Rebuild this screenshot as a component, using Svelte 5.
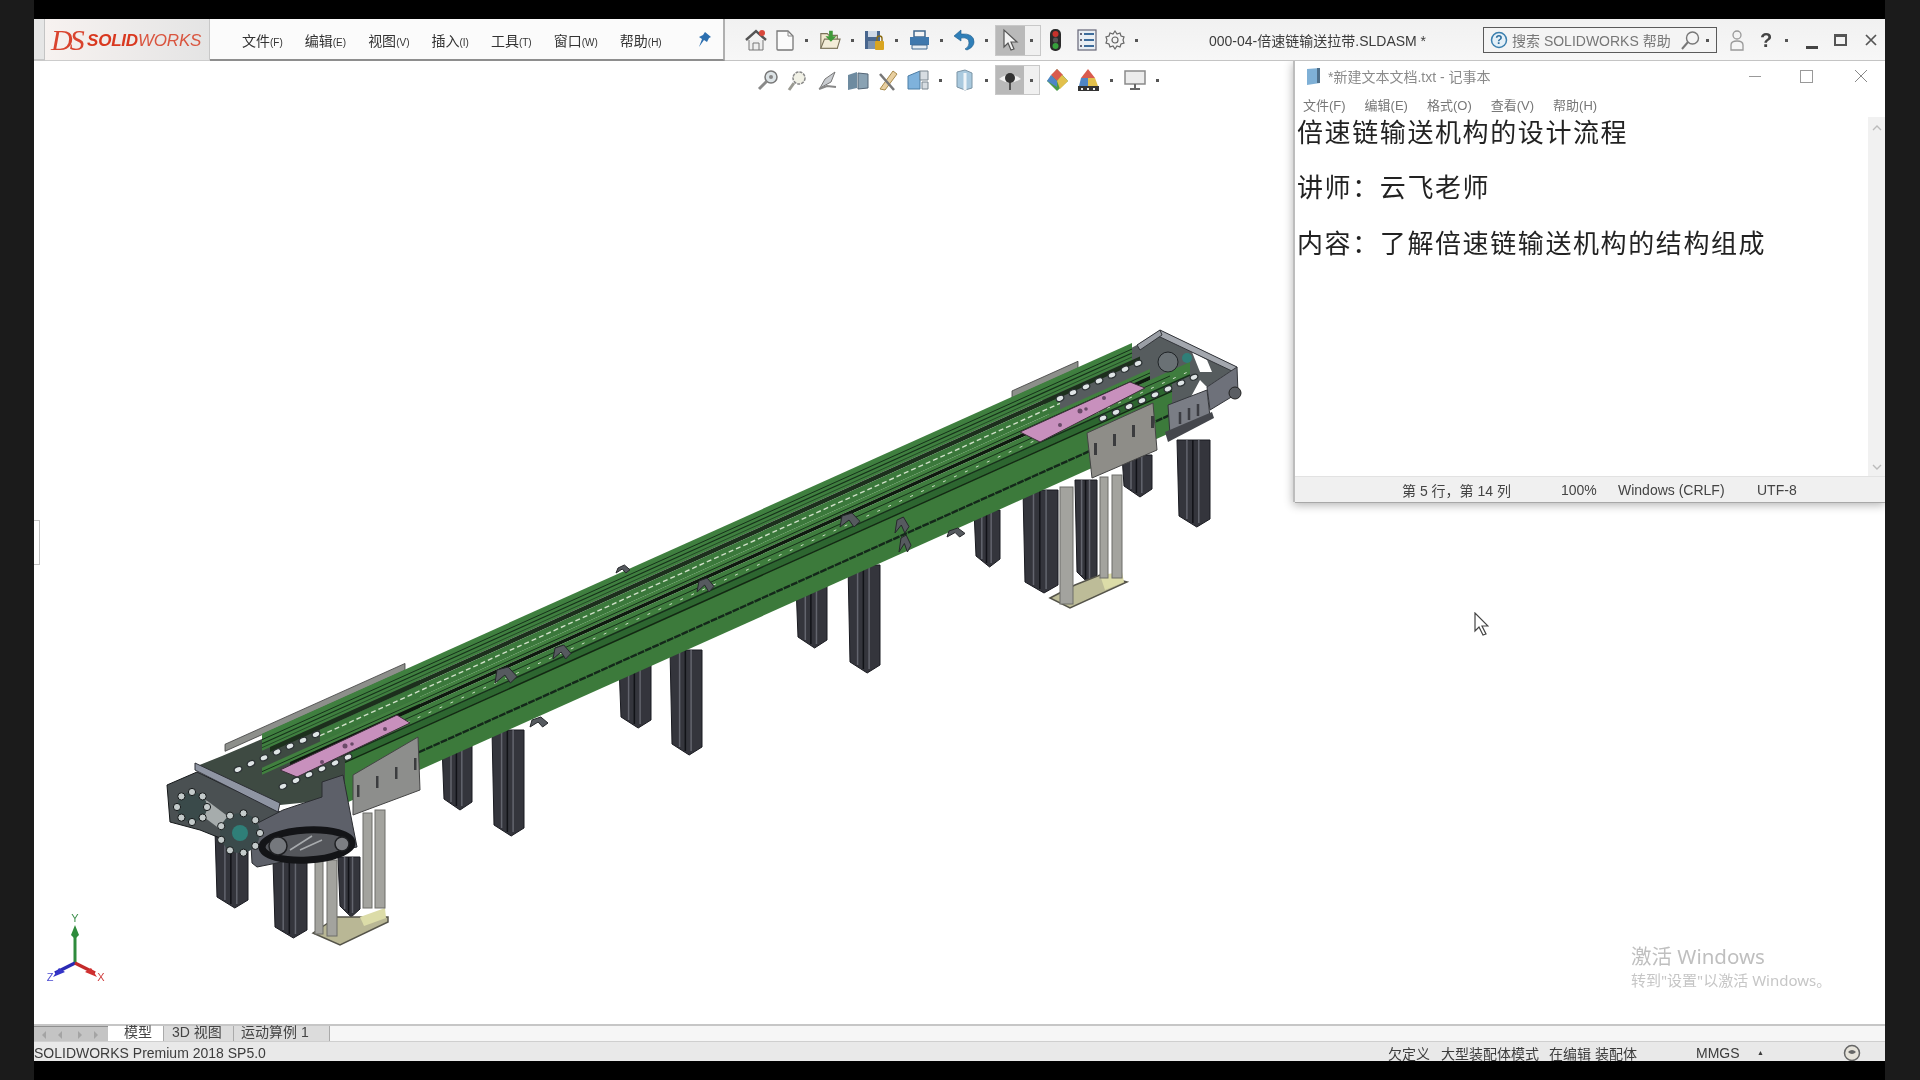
<script>
  // the conveyor is drawn along one slope, d = vertical offset from the back edge
  const slope = 0.449;
  const ry = (x, d) => 700 + d - slope * (x - 337);
  const band = (d0, d1, x0, x1) =>
    `${x0},${ry(x0, d0)} ${x1},${ry(x1, d0)} ${x1},${ry(x1, d1)} ${x0},${ry(x0, d1)}`;

  const menu = [
    ['文件', '(F)'], ['编辑', '(E)'], ['视图', '(V)'], ['插入', '(I)'],
    ['工具', '(T)'], ['窗口', '(W)'], ['帮助', '(H)']
  ];
  const noteMenu = ['文件(F)', '编辑(E)', '格式(O)', '查看(V)', '帮助(H)'];

  const legs = [
    [442, 30, 745, 810], [492, 32, 730, 836], [619, 32, 665, 728], [670, 32, 650, 755],
    [796, 31, 585, 648], [848, 32, 565, 673], [974, 26, 510, 567], [1122, 30, 455, 497],
    [1177, 33, 440, 527], [1023, 35, 490, 593], [1075, 22, 480, 583],
    [215, 33, 830, 908], [273, 34, 860, 938], [338, 22, 857, 917]
  ];
  const posts = [
    [315, 8, 860, 934], [327, 10, 860, 936], [363, 9, 813, 908], [375, 10, 810, 908],
    [1060, 13, 487, 604], [1100, 8, 477, 578], [1112, 10, 475, 578]
  ];
  const legPoints = ([x, w, top, bot]) =>
    `${x},${top} ${x + w},${top} ${x + w},${bot - 8} ${x + w * 0.6},${bot} ${x + 2},${bot - 11}`;

  // green rails, thin grooves and dashes
  const bands = [
    [0, 17, 262, 1132, '#3f7f3f'], [17, 22, 270, 1140, '#1c2f1c'], [22, 34, 320, 1060, '#3b783b'],
    [34, 41, 262, 1150, '#41803f'], [41, 45, 290, 1150, '#0e1a0e'], [45, 58, 300, 1190, '#3f7d3e'],
    [58, 66, 345, 1172, '#2d6630'], [66, 107, 345, 1172, '#3c7a3b']
  ];
  const lines = [
    [6, 1, 262, 1132, '#16311a', ''], [10, 1.2, 262, 1132, '#16311a', ''], [14, 0.8, 262, 1132, '#1c3c20', ''],
    [28, 1.4, 320, 1060, '#cfe0c8', '5 3'], [38, 1, 262, 1150, '#16311a', ''], [50, 1, 320, 1170, '#17321a', ''],
    [54, 1, 330, 1190, '#cfe0c8', '3 9'], [58, 1.4, 340, 1190, '#16301a', ''],
    [66, 1.4, 345, 1172, '#122812', ''], [89, 2.4, 375, 1172, '#14281a', '7 1']
  ];

  const rollers = (x0, x1, d, step) => {
    const out = [];
    for (let x = x0; x <= x1; x += step) out.push([x, ry(x, d)]);
    return out;
  };
  const beads = [
    ...rollers(238, 320, 25, 13), ...rollers(283, 352, 62, 13),
    ...rollers(1060, 1150, 23, 13), ...rollers(1103, 1200, 62, 13)
  ];
  const ring = (cx, cy, r, n) =>
    Array.from({ length: n }, (_, i) => [
      cx + r * Math.cos((i * 2 * Math.PI) / n),
      cy + r * Math.sin((i * 2 * Math.PI) / n)
    ]);
  const sprocket = [...ring(192, 807, 15, 8), ...ring(240, 833, 20, 9)];
  const brackets = [
    [495, 667, 22, 16], [553, 645, 18, 14], [697, 578, 17, 14], [840, 513, 20, 14],
    [895, 517, 14, 16], [899, 535, 12, 17], [616, 565, 14, 8], [530, 717, 18, 10], [947, 528, 18, 9]
  ];
  const slots = [[0, 0], [19, -9], [38, -18], [57, -27]];
</script>

<div class="screen">
  <div class="topgap"></div>

  <header class="toolbar">
    <div class="strip"></div>
    <div class="logo">
      <span class="ds">DS</span>
      <span class="brand"><b>SOLID</b>WORKS</span>
    </div>
    <nav class="menu">
      {#each menu as [name, key]}
        <span class="menuitem">{name}<small>{key}</small></span>
      {/each}
      <svg class="pin" width="16" height="18" viewBox="0 0 16 18">
        <path d="M9 1l6 5-2 1-2 4-3-2-5 7 3-8-3-2 4-2z" fill="#2c6fb0" />
      </svg>
    </nav>
    <div class="tools">
      <svg width="22" height="22" viewBox="0 0 22 22">
        <path d="M1 11L11 2l10 9" fill="none" stroke="#555" stroke-width="2.4" />
        <path d="M4 11v10h14V11" fill="#eee" stroke="#777" />
        <path d="M8 21v-7h6v7" fill="none" stroke="#777" />
        <circle cx="17" cy="4" r="3" fill="#d8483c" />
      </svg>
      <svg width="20" height="22" viewBox="0 0 20 22">
        <path d="M2 2h11l5 5v13q0 1-1 1H3q-1 0-1-1z" fill="#fbfbfb" stroke="#777" stroke-width="1.3" />
        <path d="M13 2v5h5" fill="none" stroke="#888" />
      </svg>
      <i class="dd"></i>
      <svg width="22" height="22" viewBox="0 0 24 22">
        <path d="M2 4h7l2 2h9v14H2z" fill="#f1e9cf" stroke="#7a7258" stroke-width="1.2" />
        <path d="M2 20l4-10h17l-3 10z" fill="#f3edd8" stroke="#7a7258" stroke-width="1.2" />
        <path d="M11 1h4v6h4l-6 6-6-6h4z" fill="#3f9a3a" />
      </svg>
      <i class="dd"></i>
      <svg width="21" height="22" viewBox="0 0 21 22">
        <path d="M1 2h15v18H1z" fill="#48668e" />
        <path d="M4 2h9v6H4z" fill="#cfd9e6" />
        <path d="M4 12h9v8H4z" fill="#7d93ae" />
        <rect x="11" y="12" width="9" height="9" rx="1" fill="#d9a520" />
        <path d="M13 12V9.500a2.500 2.500 0 0 1 5 0V12" fill="none" stroke="#8a6a10" stroke-width="1.400" />
      </svg>
      <i class="dd"></i>
      <svg width="21" height="22" viewBox="0 0 21 22">
        <path d="M5 2h11v6H5z" fill="#f4f4f4" stroke="#40688f" stroke-width="1.500" />
        <path d="M1 8h19v8H1z" fill="#3f78ad" />
        <path d="M3 16h15v4H3z" fill="#e6edf3" stroke="#40688f" />
      </svg>
      <i class="dd"></i>
      <svg width="22" height="22" viewBox="0 0 22 22">
        <path d="M8 1L1 7l7 5V9q8-1 8 5 0 4-4 6l2 1q7-3 7-8 0-9-13-8z" fill="#2f7fb8" stroke="#1d5b8a" stroke-width=".6" />
      </svg>
      <i class="dd"></i>
      <div class="pressed">
        <span class="pressed-main">
          <svg width="18" height="24" viewBox="0 0 18 24">
            <path d="M3 2v17l4-4 3 7 3-1-3-7h6z" fill="#f3f3f3" stroke="#555" stroke-width="1.200" />
          </svg>
        </span>
        <span class="pressed-side"><i class="dd"></i></span>
      </div>
      <svg class="light" width="11" height="22" viewBox="0 0 11 22">
        <rect width="11" height="22" rx="5" fill="#2b2b2b" />
        <circle cx="5.500" cy="5" r="3" fill="#c8322c" />
        <circle cx="5.500" cy="11" r="2.600" fill="#555" />
        <circle cx="5.500" cy="17" r="3" fill="#37a03c" />
      </svg>
      <svg class="list" width="20" height="22" viewBox="0 0 20 22">
        <rect x="1" y="1" width="18" height="20" fill="#e9eef3" stroke="#667" stroke-width="1.200" />
        <path d="M7 5h10M7 11h10M7 17h10" stroke="#3d6c9b" stroke-width="2" />
        <path d="M3 5h2M3 11h2M3 17h2" stroke="#667" stroke-width="2" />
      </svg>
      <svg width="20" height="22" viewBox="0 0 20 22">
        <path d="M10 2l2 3 3-1 1 3 3 1-1 3 1 3-3 1-1 3-3-1-2 3-2-3-3 1-1-3-3-1 1-3-1-3 3-1 1-3 3 1z" fill="none" stroke="#666" stroke-width="1.200" />
        <circle cx="10" cy="11" r="3" fill="none" stroke="#666" stroke-width="1.200" />
      </svg>
      <i class="dd"></i>
      <span class="doc">000-04-倍速链输送拉带.SLDASM *</span>
      <div class="search">
        <svg width="18" height="18" viewBox="0 0 18 18">
          <circle cx="9" cy="9" r="7.500" fill="#e4f0f8" stroke="#3b7fae" stroke-width="1.500" />
          <text x="9" y="13" text-anchor="middle" class="help">?</text>
        </svg>
        <span class="search-text">搜索 SOLIDWORKS 帮助</span>
        <svg class="lens" width="19" height="19" viewBox="0 0 19 19">
          <circle cx="11.500" cy="7" r="6" fill="none" stroke="#777" stroke-width="1.400" />
          <path d="M7 11l-6 7" stroke="#777" stroke-width="2" />
        </svg>
        <i class="dd"></i>
      </div>
      <svg class="user" width="16" height="22" viewBox="0 0 16 22">
        <circle cx="8" cy="6" r="4" fill="none" stroke="#999" stroke-width="1.300" />
        <path d="M2 21v-5q0-4 6-4t6 4v5z" fill="none" stroke="#999" stroke-width="1.300" />
      </svg>
      <span class="q">?</span>
      <i class="dd help-dd"></i>
      <span class="win-min"></span>
      <span class="win-max"></span>
      <svg class="win-x" width="12" height="12" viewBox="0 0 12 12">
        <path d="M1 1l10 10M11 1L1 11" stroke="#555" stroke-width="1.700" />
      </svg>
    </div>
  </header>

  <main class="viewport">
    <svg class="model" width="1851" height="963" viewBox="34 61 1851 963">
      <!-- legs behind the beam -->
      {#each legs as leg}
        <polygon points={legPoints(leg)} fill="#34353c" stroke="#191a20" />
        <path d="M{leg[0] + leg[1] * 0.3} {leg[2]}V{leg[3] - 8}M{leg[0] + leg[1] * 0.66} {leg[2]}V{leg[3] - 4}" stroke="#63656e" stroke-width="1.500" />
        <path d="M{leg[0] + leg[1] * 0.48} {leg[2]}V{leg[3] - 4}" stroke="#111217" stroke-width="1.500" />
      {/each}

      <!-- foot plates -->
      <polygon points="313,933 337,917 388,917 388,922 340,945" fill="#b9b795" stroke="#55544a" stroke-width="1.500" />
      <polygon points="1050,598 1075,585 1100,575 1127,582 1070,608" fill="#bdbc98" stroke="#55544a" stroke-width="1.500" />
      <polygon points="360,917 385,908 386,918 364,926" fill="#dcdca8" />
      <polygon points="1100,575 1122,572 1124,582 1105,590" fill="#dcdca8" />

      {#each posts as [x, w, top, bot]}
        <rect x={x} y={top} width={w} height={bot - top} fill="#a3a39e" stroke="#6c6c68" />
      {/each}

      <!-- chain bed under the rails at both ends -->
      <polygon points="222,756 262,739 345,702 420,680 420,735 353,775 330,800 280,805 197,766" fill="#3e4a42" />
      <polygon points="1137,345 1160,330 1237,367 1207,387 1200,380 1172,432 1060,440 1040,395" fill="#565c5e" />
      <polygon points="1192,352 1207,360 1212,372 1200,372" fill="#fff" />

      <!-- grey back rails -->
      <polygon points={band(-6, 1, 225, 405)} fill="#8d8f8b" stroke="#3c3c3c" stroke-width=".8" />
      <polygon points={band(-6, 1, 1012, 1078)} fill="#8d8f8b" stroke="#3c3c3c" stroke-width=".8" />

      {#each bands as [d0, d1, x0, x1, c]}
        <polygon points={band(d0, d1, x0, x1)} fill={c} />
      {/each}
      {#each lines as [d, w, x0, x1, c, dash]}
        <line x1={x0} y1={ry(x0, d)} x2={x1} y2={ry(x1, d)} stroke={c} stroke-width={w} stroke-dasharray={dash} />
      {/each}

      <!-- pink plates -->
      <polygon points="280,770 397,715 410,723 297,777" fill="#c890bd" stroke="#3d2f3a" />
      <polygon points="1020,432 1130,382 1145,388 1040,442" fill="#c890bd" stroke="#3d2f3a" />
      <g fill="#6a4a68">
        <circle cx="345" cy="746" r="2.500" /><circle cx="352" cy="744" r="1.800" /><circle cx="322" cy="762" r="2" />
        <circle cx="385" cy="729" r="2" /><circle cx="1080" cy="411" r="2.500" /><circle cx="1086" cy="409" r="1.800" />
        <circle cx="1104" cy="398" r="2" /><circle cx="1060" cy="425" r="2" />
      </g>

      <!-- chain rollers -->
      {#each beads as [x, y]}
        <ellipse cx={x} cy={y} rx="4" ry="2.800" transform="rotate(-24 {x} {y})" fill="#dfe5e6" stroke="#2b3133" stroke-width="1.200" />
      {/each}

      <!-- small clamps along the rails -->
      {#each brackets as [x, y, w, h]}
        <path d="M{x} {y + h}L{x + 2} {y + 3}L{x + w * 0.6} {y}L{x + w} {y + h * 0.6}L{x + w * 0.7} {y + h}L{x + w * 0.45} {y + h * 0.5}Z" fill="#565a5f" stroke="#26282b" />
      {/each}

      <!-- left drive end -->
      <polygon points="167,785 197,772 280,812 250,850 200,830 170,822" fill="#4a5052" stroke="#15181a" />
      <polygon points="250,827 283,810 322,797 322,782 343,775 353,827 357,847 257,867 252,863" fill="#5d6069" stroke="#2a2c30" />
      <path d="M203 807L227 825" stroke="#a6acac" stroke-width="15" stroke-linecap="round" />
      <circle cx="192" cy="807" r="15" fill="#3a4a4a" />
      <circle cx="240" cy="833" r="20" fill="#3b4a4b" />
      <circle cx="240" cy="833" r="8" fill="#2f7f78" />
      {#each sprocket as [x, y]}
        <circle cx={x} cy={y} r="3.600" fill="#c4cbcb" stroke="#15191a" />
      {/each}
      <polygon points="195,763 280,803 278,812 195,770" fill="#8f95a3" stroke="#2e3036" />
      <ellipse cx="307" cy="845" rx="45" ry="15" transform="rotate(-3 307 845)" fill="#54565b" stroke="#131417" stroke-width="7" />
      <circle cx="342" cy="844" r="7" fill="#7d7f83" stroke="#1f2023" stroke-width="1.500" />
      <circle cx="278" cy="846" r="9" fill="#75787d" stroke="#1f2023" stroke-width="1.500" />
      <path d="M290 850L312 836M300 850L322 840" stroke="#a8abae" stroke-width="1.500" />

      <!-- guard plates -->
      <polygon points="353,775 418,737 420,790 353,815" fill="#8d8e8c" stroke="#444" />
      <polygon points="1087,433 1153,403 1157,450 1092,478" fill="#8e8d88" stroke="#444" />
      {#each slots as [dx, dy]}
        <rect x={357 + dx} y={785 + dy} width="2.500" height="12" fill="#3b3c3e" />
        <rect x={1094 + dx} y={443 + dy} width="3" height="12" fill="#3b3c3e" />
      {/each}

      <!-- right idler end -->
      <polygon points="1160,330 1237,367 1234,372 1158,336" fill="#a3a7ae" stroke="#34363b" />
      <polygon points="1137,345 1160,330 1162,335 1140,350" fill="#9a9ea5" stroke="#34363b" />
      <polygon points="1207,387 1237,367 1238,393 1210,410" fill="#6e717a" stroke="#33353a" />
      <polygon points="1168,405 1207,390 1210,417 1170,435" fill="#7a7d85" stroke="#33353a" />
      <polygon points="1165,432 1212,412 1214,418 1168,442" fill="#44464c" />
      <circle cx="1168" cy="362" r="10" fill="#6a7175" stroke="#1f2326" />
      <circle cx="1187" cy="358" r="5" fill="#2f7f78" />
      <circle cx="1235" cy="393" r="6" fill="#5b5e63" stroke="#222" />
      <path d="M1180 412v12M1189 408v12M1198 404v12" stroke="#3b3c42" stroke-width="2.500" />
    </svg>

    <div class="viewbar">
      <svg width="22" height="22" viewBox="0 0 22 22">
        <circle cx="14" cy="8" r="6" fill="#dce3e6" stroke="#777" stroke-width="1.500" />
        <path d="M10 12l-8 8" stroke="#8a8a8a" stroke-width="3" /><circle cx="14" cy="8" r="2" fill="#888" />
      </svg>
      <svg width="22" height="22" viewBox="0 0 22 22">
        <circle cx="12" cy="9" r="6" fill="#f1f1e6" stroke="#888" stroke-width="1.500" stroke-dasharray="3 1" />
        <path d="M7 14l-5 7" stroke="#9a9a92" stroke-width="3" />
      </svg>
      <svg width="22" height="22" viewBox="0 0 22 22">
        <path d="M3 19l5-9 10-7-4 10z" fill="#c9ccd0" stroke="#777" /><path d="M2 20l8-3 9 1" stroke="#888" stroke-width="2" fill="none" />
      </svg>
      <svg width="22" height="22" viewBox="0 0 22 22">
        <path d="M1 6l9-3v16l-9 2z" fill="#6e8ba0" /><path d="M11 4l10 1v14l-10 1z" fill="#8aa2b3" stroke="#567" />
      </svg>
      <svg width="22" height="22" viewBox="0 0 22 22">
        <path d="M3 20L16 2l4 3L8 21z" fill="#e8cfa0" stroke="#a88a4a" /><path d="M3 5l14 16" stroke="#777" stroke-width="2.500" />
      </svg>
      <svg width="22" height="22" viewBox="0 0 22 22">
        <path d="M1 7l12-5v18H1z" fill="#7fb2dc" stroke="#4d7ea6" /><path d="M13 2h8v9h-8zM15 13h6v7h-6z" fill="#d7dde2" stroke="#7a8790" />
      </svg>
      <i class="dd"></i>
      <svg width="22" height="22" viewBox="0 0 22 22">
        <path d="M4 3l8-2 7 3v15l-7 2-8-3z" fill="#a9c9de" stroke="#7b94a5" /><path d="M12 4v17" stroke="#eef4f8" stroke-width="3" />
      </svg>
      <i class="dd"></i>
      <div class="pressed small">
        <span class="pressed-main">
          <svg width="24" height="22" viewBox="0 0 24 22">
            <path d="M1 10q11-9 22 0-11 7-22 0z" fill="#f1f1f1" />
            <circle cx="12" cy="9" r="5" fill="#333" /><path d="M12 9v12" stroke="#333" stroke-width="1.500" />
          </svg>
        </span>
        <span class="pressed-side"><i class="dd"></i></span>
      </div>
      <svg width="23" height="24" viewBox="0 0 23 24">
        <path d="M11 1l11 12-11 10L1 13z" fill="#4c9b48" /><path d="M11 1l6 6-6 6-6-6z" fill="#d95b4e" />
        <path d="M11 13l5-6 6 6-8 8z" fill="#e2c04c" /><path d="M5 7l6 6v6l-10-6z" fill="#4f86c6" />
      </svg>
      <svg width="23" height="24" viewBox="0 0 23 24">
        <path d="M11 1l7 9H4z" fill="#d95b4e" /><path d="M4 10h7v8H2z" fill="#4f86c6" /><path d="M11 10h7l3 8H11z" fill="#e2c04c" />
        <path d="M1 18h21v5H1z" fill="#333" /><path d="M4 21h2M10 21h2M16 21h2" stroke="#eee" stroke-width="2" />
      </svg>
      <i class="dd"></i>
      <svg width="22" height="22" viewBox="0 0 22 22">
        <rect x="1" y="2" width="20" height="13" fill="#ececec" stroke="#8a8a8a" stroke-width="1.500" />
        <path d="M11 15v4M6 20h10" stroke="#666" stroke-width="2" />
      </svg>
      <i class="dd"></i>
    </div>

    <span class="handle"></span>

    <section class="notepad">
      <div class="note-title">
        <svg width="19" height="19" viewBox="0 0 19 19">
          <path d="M3 2l13-1v15l-13 2z" fill="#7fb0d6" /><path d="M13 1h3v15h-3z" fill="#4f6f8a" />
        </svg>
        <span class="note-name">*新建文本文档.txt - 记事本</span>
        <span class="note-min"></span>
        <span class="note-max"></span>
        <svg class="note-x" width="14" height="14" viewBox="0 0 14 14">
          <path d="M1 1l12 12M13 1L1 13" stroke="#888" stroke-width="1" />
        </svg>
      </div>
      <div class="note-menu">
        {#each noteMenu as item}<span>{item}</span>{/each}
      </div>
      <div class="note-body">
        <pre class="note-text">倍速链输送机构的设计流程

讲师：云飞老师

内容：了解倍速链输送机构的结构组成</pre>
        <div class="scroll">
          <svg width="10" height="6" viewBox="0 0 10 6"><path d="M1 5l4-4 4 4" fill="none" stroke="#bbb" stroke-width="1.400" /></svg>
          <svg width="10" height="6" viewBox="0 0 10 6"><path d="M1 1l4 4 4-4" fill="none" stroke="#bbb" stroke-width="1.400" /></svg>
        </div>
      </div>
      <div class="note-status">
        <span class="st-pos">第 5 行，第 14 列</span>
        <span class="st-zoom">100%</span>
        <span class="st-eol">Windows (CRLF)</span>
        <span class="st-enc">UTF-8</span>
      </div>
    </section>

    <svg class="triad" width="70" height="80" viewBox="0 -10 70 80">
      <path d="M30 44V12" stroke="#2e8b3c" stroke-width="3" />
      <path d="M30 6l4 10-4 4-4-4z" fill="#2e8b3c" />
      <path d="M30 44l-20 10" stroke="#2a2ab4" stroke-width="3.500" />
      <path d="M30 44l20 10" stroke="#c42a2a" stroke-width="3.500" />
      <path d="M8 58l6-9 6 4z" fill="#3434c8" />
      <path d="M52 58l-6-9-6 4z" fill="#d03030" />
      <text x="30" y="3" text-anchor="middle" class="ax y">Y</text>
      <text x="5" y="62" text-anchor="middle" class="ax z">Z</text>
      <text x="56" y="62" text-anchor="middle" class="ax x">X</text>
    </svg>

    <svg class="cursor" width="16" height="25" viewBox="0 0 16 25">
      <path d="M2 1v18l4-4 4 8 3-1-4-8h6z" fill="#fff" stroke="#444" stroke-width="1.200" />
    </svg>

    <div class="watermark">
      <div class="wm1">激活 Windows</div>
      <div class="wm2">转到"设置"以激活 Windows。</div>
    </div>
  </main>

  <div class="tabs">
    <div class="tabnav">
      <svg width="74" height="15" viewBox="0 0 74 15">
        <path d="M12 4l-4 4 4 4zM28 4l-4 4 4 4zM44 4l4 4-4 4zM60 4l4 4-4 4z" fill="#a4a4a4" />
      </svg>
    </div>
    <span class="tab active">模型</span>
    <span class="tab t3d">3D 视图</span>
    <span class="tab tmotion">运动算例 1</span>
  </div>

  <footer class="status">
    <span class="product">SOLIDWORKS Premium 2018 SP5.0</span>
    <span class="s1">欠定义</span>
    <span class="s2">大型装配体模式</span>
    <span class="s3">在编辑 装配体</span>
    <span class="s4">MMGS</span>
    <span class="s5">▲</span>
    <svg class="s6" width="20" height="18" viewBox="0 0 20 18">
      <circle cx="10" cy="9" r="7.500" fill="#e6e3da" stroke="#666" stroke-width="1.500" />
      <path d="M6 8q4-4 8 0-4 4-8 0z" fill="#666" />
    </svg>
  </footer>

  <div class="botgap"></div>
</div>

<style>
  :global(body) {
    margin: 0;
    background: #1b1b1b;
  }

  .screen {
    width: 1920px;
    height: 1080px;
    box-sizing: border-box;
    padding: 0 35px 0 34px;
    display: flex;
    flex-direction: column;
    overflow: hidden;
    background: #1b1b1b;
    font-family: "Liberation Sans", "Noto Sans CJK SC", sans-serif;
    filter: blur(0.45px);
  }

  .topgap {
    height: 19px;
    background: #000;
    flex: none;
  }

  .botgap {
    height: 19px;
    background: #000;
    flex: none;
  }

  /* main title bar */
  .toolbar {
    height: 42px;
    flex: none;
    display: flex;
    background: #f3f3f3;
  }

  .strip {
    width: 10px;
    background: #e6e6e6;
    border-bottom: 2px solid #c8c8c8;
    box-sizing: border-box;
  }

  .logo {
    width: 166px;
    display: flex;
    align-items: center;
    box-sizing: border-box;
    padding-left: 6px;
    color: #d9442f;
    background: linear-gradient(90deg, #f7f2f0, #e4e4e4);
    border-left: 1px solid #c4c4c4;
    border-right: 1px solid #c8c8c8;
    border-bottom: 1px solid #ccc;
    overflow: hidden;
  }

  .ds {
    font-family: "Liberation Serif", serif;
    font-style: italic;
    font-size: 30px;
    line-height: 34px;
    letter-spacing: -3px;
    width: 36px;
    flex: none;
  }

  .brand {
    font-size: 17px;
    font-style: italic;
    letter-spacing: -0.2px;
    color: #d9553f;
    white-space: nowrap;
    padding-top: 3px;
  }

  .brand b {
    color: #d9381f;
  }

  .menu {
    width: 515px;
    box-sizing: border-box;
    padding: 2px 0 0 32px;
    display: flex;
    align-items: center;
    gap: 22px;
    background: #fbfbfb;
    border-bottom: 2px solid #8e8e8e;
    border-right: 2px solid #b0b0b0;
    font-size: 14px;
    color: #333;
    white-space: nowrap;
  }

  .menuitem small {
    font-size: 10px;
  }

  .pin {
    margin-left: 12px;
  }

  .tools {
    flex: 1;
    display: flex;
    align-items: center;
    gap: 8px;
    padding: 1px 0 0 20px;
    border-bottom: 1px solid #c4c4c4;
    background: linear-gradient(#f1f1f1, #f7f7f7);
  }

  .dd {
    flex: none;
    display: block;
    width: 7.500px;
    height: 3px;
    position: relative;
  }

  .dd::after {
    content: "";
    position: absolute;
    left: 2px;
    top: 0;
    width: 3px;
    height: 3px;
    background: #555;
  }

  .help-dd {
    margin-left: 4px;
  }

  .pressed {
    width: 46px;
    height: 31px;
    margin-left: -4px;
    display: flex;
    flex: none;
    background: #f0f0f0;
    border: 1px solid #c8c8c8;
    box-sizing: border-box;
  }

  .pressed.small {
    width: 45px;
    height: 30px;
    margin: 0 -2px 0 -3px;
  }

  .pressed-main {
    flex: 1;
    display: flex;
    align-items: center;
    justify-content: center;
    background: #b9b9b9;
  }

  .pressed-side {
    width: 15px;
    display: flex;
    align-items: center;
    justify-content: center;
  }

  .light {
    margin-left: 1px;
  }

  .list {
    margin-left: 8px;
  }

  .doc {
    width: 266px;
    margin-left: 61px;
    flex: none;
    font-size: 14px;
    color: #3c3c3c;
    white-space: nowrap;
  }

  .search {
    width: 234px;
    height: 26px;
    flex: none;
    box-sizing: border-box;
    margin-left: 0;
    display: flex;
    align-items: center;
    padding-left: 6px;
    gap: 4px;
    border: 1px solid #5a5a5a;
    background: #f4f4f4;
    color: #777;
    font-size: 14px;
  }

  .help {
    font: bold 12px "Liberation Sans", sans-serif;
    fill: #2f6f9e;
  }

  .search-text {
    width: 165px;
    white-space: nowrap;
  }

  .user {
    margin-left: 4px;
  }

  .q {
    margin-left: 7px;
    font-size: 20px;
    font-weight: bold;
    color: #444;
    width: 11px;
  }

  .win-min {
    width: 12px;
    height: 3px;
    background: #444;
    margin: 14px 0 0 7px;
  }

  .win-max {
    width: 13px;
    height: 12px;
    box-sizing: border-box;
    border: 2px solid #555;
    border-top-width: 3px;
    margin-left: 8px;
  }

  .win-x {
    margin-left: 10px;
  }

  /* 3d view */
  .viewport {
    flex: 1;
    position: relative;
    background: #fff;
    overflow: hidden;
  }

  .model {
    display: block;
    position: absolute;
    inset: 0;
  }

  .viewbar {
    position: absolute;
    left: 723px;
    top: 4px;
    height: 30px;
    display: flex;
    align-items: center;
    gap: 8px;
  }

  .handle {
    position: absolute;
    left: 0;
    top: 459px;
    width: 6px;
    height: 45px;
    box-sizing: border-box;
    border: 1px solid #c4c4c4;
    border-left: none;
    background: #fff;
  }

  .notepad {
    position: absolute;
    right: 0;
    top: -1px;
    width: 592px;
    height: 442px;
    display: flex;
    flex-direction: column;
    background: #fff;
    border-left: 2px solid #bdbdbd;
    box-sizing: border-box;
    box-shadow: 0 3px 9px rgba(0, 0, 0, 0.3);
  }

  .note-title {
    height: 32px;
    flex: none;
    display: flex;
    align-items: center;
    padding-left: 9px;
    gap: 5px;
    font-size: 14px;
    color: #8a8a8a;
  }

  .note-name {
    width: 416px;
    white-space: nowrap;
  }

  .note-min {
    width: 12px;
    height: 1px;
    background: #999;
  }

  .note-max {
    width: 11px;
    height: 11px;
    border: 1px solid #999;
    margin-left: 34px;
  }

  .note-x {
    margin-left: 36px;
  }

  .note-menu {
    height: 25px;
    flex: none;
    display: flex;
    align-items: center;
    gap: 19px;
    padding-left: 8px;
    font-size: 13px;
    color: #777;
  }

  .note-body {
    flex: 1;
    display: flex;
    min-height: 0;
  }

  .note-text {
    flex: 1;
    margin: 0;
    padding: 0 0 0 2px;
    font-family: "Noto Sans CJK SC", sans-serif;
    font-size: 26px;
    line-height: 27.7px;
    letter-spacing: 1.6px;
    color: #222;
  }

  .scroll {
    width: 17px;
    display: flex;
    flex-direction: column;
    justify-content: space-between;
    align-items: center;
    padding: 8px 0 6px;
    background: #f1f1f1;
  }

  .note-status {
    height: 25px;
    flex: none;
    display: flex;
    align-items: center;
    background: #f0f0f0;
    border-top: 1px solid #e2e2e2;
    box-shadow: 0 1px 0 #a8a8a8;
    font-size: 14px;
    color: #444;
    white-space: nowrap;
  }

  .st-pos {
    margin-left: 107px;
    width: 159px;
  }

  .st-zoom {
    width: 57px;
  }

  .st-eol {
    width: 139px;
  }

  .triad {
    position: absolute;
    left: 11px;
    top: 848px;
  }

  .ax {
    font: 11px "Liberation Sans", sans-serif;
  }

  .ax.y {
    fill: #3d8f4c;
  }

  .ax.z {
    fill: #4a4ad0;
  }

  .ax.x {
    fill: #d04040;
  }

  .cursor {
    position: absolute;
    left: 1439px;
    top: 551px;
  }

  .watermark {
    position: absolute;
    left: 1597px;
    top: 882px;
    color: #bfbfbf;
    white-space: nowrap;
    font-family: "Noto Sans", "Noto Sans CJK SC", sans-serif;
  }

  .wm1 {
    font-size: 20.500px;
    line-height: 26px;
  }

  .wm2 {
    font-size: 15px;
    line-height: 22px;
    color: #c6c6c6;
  }

  /* bottom strips */
  .tabs {
    height: 18px;
    flex: none;
    display: flex;
    align-items: stretch;
    box-sizing: border-box;
    background: #f6f6f6;
    border-top: 2px solid #c6c6c6;
    border-bottom: 1px solid #cfcfcf;
    font-size: 14px;
    line-height: 13px;
    color: #444;
    white-space: nowrap;
  }

  .tabnav {
    width: 74px;
    background: #c4c4c4;
    border-top: 1px solid #8f8f8f;
    overflow: hidden;
  }

  .tabnav svg {
    display: block;
  }

  .tab {
    box-sizing: border-box;
  }

  .tab.active {
    width: 55px;
    padding-left: 16px;
    background: #fff;
  }

  .tab.t3d {
    width: 70px;
    padding-left: 8px;
    background: #dcdcdc;
    border-left: 1px solid #aaa;
  }

  .tab.tmotion {
    width: 97px;
    padding-left: 7px;
    background: #dcdcdc;
    border-left: 1px solid #aaa;
    border-right: 1px solid #aaa;
  }

  .status {
    height: 19px;
    flex: none;
    box-sizing: border-box;
    padding-top: 2px;
    display: flex;
    align-items: center;
    background: #e9e9e9;
    font-size: 14px;
    color: #3c3c3c;
    white-space: nowrap;
    overflow: hidden;
  }

  .product {
    width: 1354px;
  }

  .s1 {
    width: 53px;
  }

  .s2 {
    width: 108px;
  }

  .s3 {
    width: 147px;
  }

  .s4 {
    width: 61px;
  }

  .s5 {
    width: 85px;
    font-size: 7px;
  }

  .s6 {
    flex: none;
  }
</style>
